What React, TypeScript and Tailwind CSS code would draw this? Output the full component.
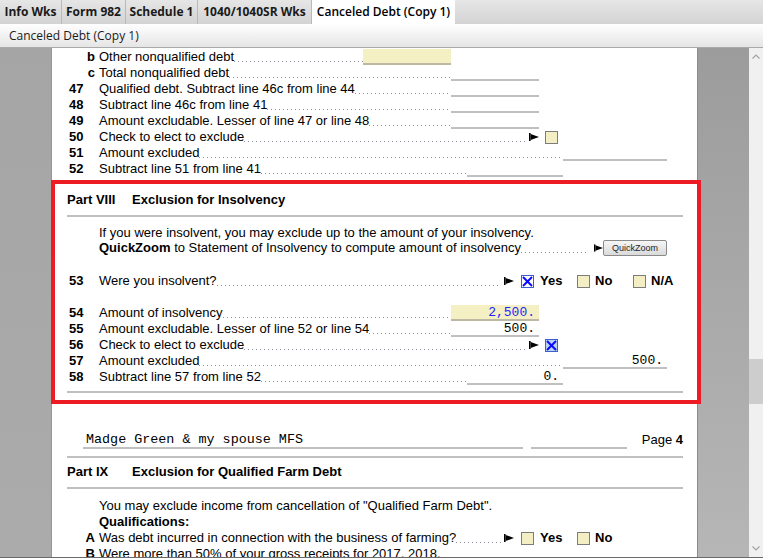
import React from "react";

const leader =
  "flex-1 min-w-0 h-[1px] mb-[3px] bg-[linear-gradient(to_right,#8d8d9e_1px,transparent_1px)] bg-[length:4px_1px] bg-repeat-x";

function Arrow() {
  return (
    <svg width="10" height="8" viewBox="0 0 10 8" className="block">
      <rect x="0" y="0" width="1.6" height="8" fill="#000" />
      <polygon points="1.6,1 10,4 1.6,7" fill="#000" />
    </svg>
  );
}

function Box({ checked = false, blue = false }: { checked?: boolean; blue?: boolean }) {
  if (checked) {
    return (
      <div
        className={`w-[13px] h-[13px] border border-[#3a5fd0] ${
          blue ? "bg-[#bcd2f0]" : "bg-white"
        }`}
      >
        <svg width="11" height="11" viewBox="0 0 11 11" className="block">
          <line x1="1" y1="1" x2="10" y2="10" stroke="#0a0aff" strokeWidth="2" />
          <line x1="10" y1="1" x2="1" y2="10" stroke="#0a0aff" strokeWidth="2" />
        </svg>
      </div>
    );
  }
  return <div className="w-[13px] h-[13px] border border-[#7c7c7c] bg-[#f4eec4]" />;
}

function Row({
  n,
  sub,
  label,
  lead,
  children,
}: {
  n?: string;
  sub?: string;
  label: React.ReactNode;
  lead: string;
  children?: React.ReactNode;
}) {
  return (
    <div className="flex h-[16px] leading-[16px]">
      {sub ? (
        <div className="w-[32px] shrink-0 font-bold text-right pr-[4px]">{sub}</div>
      ) : (
        <div className="w-[32px] shrink-0 font-bold pl-[2px]">{n}</div>
      )}
      <div className={`flex items-end shrink-0 ${lead}`}>
        <span className="whitespace-nowrap">{label}</span>
        <span className={leader} />
      </div>
      {children}
    </div>
  );
}

function Field({
  w,
  value,
  yellow = false,
  blue = false,
}: {
  w: string;
  value?: string;
  yellow?: boolean;
  blue?: boolean;
}) {
  return (
    <div
      className={`${w} h-[16px] border-b-2 text-right pr-[4px] font-['Liberation_Mono',monospace] text-[13px] leading-[15px] ${
        yellow ? "bg-[#f5efc4] border-[#bcb8a4]" : "border-[#c0c0c0]"
      } ${blue ? "text-[#1f1fff]" : "text-black"}`}
    >
      {value}
    </div>
  );
}

function YesNo({ na = false, yes = false }: { na?: boolean; yes?: boolean }) {
  return (
    <div className="flex items-center font-bold">
      <Box checked={yes} />
      <span className="w-[43px] pl-[6px]">Yes</span>
      <Box />
      <span className="w-[43px] pl-[5px]">No</span>
      {na ? (
        <>
          <Box />
          <span className="pl-[5px]">N/A</span>
        </>
      ) : null}
    </div>
  );
}

function Rule({ className }: { className: string }) {
  return <div className={`h-[2px] bg-[#c0c0c0] ${className}`} />;
}

function PartHead({ part, title, className }: { part: string; title: string; className: string }) {
  return (
    <div className={`flex h-[16px] leading-[16px] font-bold text-[13px] ${className}`}>
      <span className="w-[65px]">{part}</span>
      <span>{title}</span>
    </div>
  );
}

const tabs = [
  { label: "Info Wks", w: "w-[62px]" },
  { label: "Form 982", w: "w-[64px]" },
  { label: "Schedule 1", w: "w-[72px]" },
  { label: "1040/1040SR Wks", w: "w-[114px]" },
];

export default function App() {
  return (
    <div className="w-[763px] h-[558px] overflow-hidden flex flex-col bg-white text-black font-['Liberation_Sans',Arial,sans-serif] text-[13px]">
      {/* tab strip */}
      <div className="h-[24px] shrink-0 flex bg-gradient-to-b from-[#e6e6e6] to-[#d3d3d3] font-['Open_Sans',sans-serif] font-bold text-[12px] text-[#1a1a1a]">
        {tabs.map((t) => (
          <div
            key={t.label}
            className={`${t.w} flex items-center justify-center border-r border-[#b9b9b9] whitespace-nowrap`}
          >
            {t.label}
          </div>
        ))}
        <div className="w-[143px] flex items-center justify-center bg-white whitespace-nowrap font-semibold text-black">
          Canceled Debt (Copy 1)
        </div>
      </div>
      <div className="h-[24px] shrink-0 flex items-center px-[9px] border-b border-[#a9a9a9] bg-gradient-to-b from-white to-[#e5e5e5] font-['Open_Sans',sans-serif] text-[12px] text-[#1a1a1a]">
        Canceled Debt (Copy 1)
      </div>

      {/* document area */}
      <div className="relative flex flex-1 min-h-0 border-b border-[#6a6a6a]">
        <div className="w-[52px] shrink-0 bg-gradient-to-b from-[#a5a5a5] to-[#ababab] border-r border-[#979797]" />

        <div className="w-[645px] shrink-0 bg-white overflow-hidden pl-[15px]">
          <div className="w-[616px] pt-[1px]">
            <Row sub="b" label="Other nonqualified debt" lead="w-[264px]">
              <Field w="w-[88px]" yellow />
            </Row>
            <Row sub="c" label="Total nonqualified debt" lead="w-[352px]">
              <Field w="w-[88px]" />
            </Row>
            <Row n="47" label="Qualified debt. Subtract line 46c from line 44" lead="w-[352px]">
              <Field w="w-[88px]" />
            </Row>
            <Row n="48" label="Subtract line 46c from line 41" lead="w-[352px]">
              <Field w="w-[88px]" />
            </Row>
            <Row n="49" label="Amount excludable. Lesser of line 47 or line 48" lead="w-[352px]">
              <Field w="w-[88px]" />
            </Row>
            <Row n="50" label="Check to elect to exclude " lead="w-[426px]">
              <div className="w-[20px] pl-[4px] flex items-center">
                <Arrow />
              </div>
              <div className="flex items-center">
                <Box />
              </div>
            </Row>
            <Row n="51" label="Amount excluded" lead="w-[464px]">
              <Field w="w-[104px]" />
            </Row>
            <Row n="52" label="Subtract line 51 from line 41" lead="w-[368px]">
              <Field w="w-[96px]" />
            </Row>

            <PartHead part="Part VIII" title="Exclusion for Insolvency" className="mt-[15px]" />
            <Rule className="mt-[7px]" />

            <div className="pl-[32px] mt-[8px] h-[15px] leading-[15px]">
              If you were insolvent, you may exclude up to the amount of your insolvency.
            </div>
            <div className="flex h-[16px] leading-[16px] pl-[32px]">
              <div className="flex items-end w-[489px]">
                <span className="whitespace-nowrap">
                  <b>QuickZoom</b> to Statement of Insolvency to compute amount of insolvency
                </span>
                <span className={leader} />
              </div>
              <div className="w-[15px] pl-[6px] flex items-center">
                <Arrow />
              </div>
              <div className="w-[64px] h-[16px] border border-[#8a8a8a] rounded-[2px] bg-gradient-to-b from-[#f6f6f6] to-[#dadada] flex items-center justify-center text-[9px] leading-none text-[#222]">
                QuickZoom
              </div>
            </div>

            <div className="mt-[17px]">
              <Row n="53" label="Were you insolvent?" lead="w-[399px]">
                <div className="w-[23px] pl-[6px] flex items-center">
                  <Arrow />
                </div>
                <YesNo yes na />
              </Row>
            </div>

            <div className="mt-[16px]">
              <Row n="54" label="Amount of insolvency" lead="w-[352px]">
                <Field w="w-[88px]" value="2,500." yellow blue />
              </Row>
              <Row n="55" label="Amount excludable. Lesser of line 52 or line 54" lead="w-[352px]">
                <Field w="w-[88px]" value="500." />
              </Row>
              <Row n="56" label="Check to elect to exclude " lead="w-[426px]">
                <div className="w-[20px] pl-[4px] flex items-center">
                  <Arrow />
                </div>
                <div className="flex items-center">
                  <Box checked blue />
                </div>
              </Row>
              <Row n="57" label="Amount excluded" lead="w-[464px]">
                <Field w="w-[104px]" value="500." />
              </Row>
              <Row n="58" label="Subtract line 57 from line 52" lead="w-[368px]">
                <Field w="w-[96px]" value="0." />
              </Row>
            </div>
            <Rule className="mt-[6px]" />

            {/* footer of page */}
            <div className="mt-[39px] flex h-[17px]">
              <div className="ml-[16px] w-[440px] border-b-2 border-[#c0c0c0] font-['Liberation_Mono',monospace] text-[13.4px] leading-[16px] pl-[3px] whitespace-nowrap">
                Madge Green &amp; my spouse MFS
              </div>
              <div className="ml-[8px] w-[96px] border-b-2 border-[#c0c0c0]" />
              <div className="flex-1 text-right leading-[16px]">
                Page <b>4</b>
              </div>
            </div>
            <Rule className="mt-[7px]" />

            <PartHead part="Part IX" title="Exclusion for Qualified Farm Debt" className="mt-[6px]" />
            <Rule className="mt-[7px]" />

            <div className="pl-[32px] mt-[9px] h-[16px] leading-[16px]">
              You may exclude income from cancellation of "Qualified Farm Debt".
            </div>
            <div className="pl-[32px] h-[16px] leading-[16px] font-bold">Qualifications:</div>
            <Row sub="A" label="Was debt incurred in connection with the business of farming?" lead="w-[403px]">
              <div className="w-[19px] pl-[2px] flex items-center">
                <Arrow />
              </div>
              <YesNo />
            </Row>
            <Row sub="B" label="Were more than 50% of your gross receipts for 2017, 2018," lead="w-[403px]" />
          </div>
        </div>

        <div className="w-[52px] shrink-0 bg-gradient-to-b from-[#9c9c9c] to-[#b6b6b6] border-l border-[#8b8b8b]" />

        {/* scrollbar */}
        <div className="w-[14px] shrink-0 bg-[#f0f0f0] flex flex-col">
          <div className="h-[17px] flex items-center justify-center">
            <svg width="8" height="5" viewBox="0 0 8 5">
              <polyline points="0.5,4.5 4,1 7.5,4.5" fill="none" stroke="#a3a3a3" strokeWidth="1.2" />
            </svg>
          </div>
          <div className="flex-1">
            <div className="mt-[294px] h-[45px] bg-[#cdcdcd]" />
          </div>
          <div className="h-[17px] flex items-center justify-center">
            <svg width="8" height="5" viewBox="0 0 8 5">
              <polyline points="0.5,0.5 4,4 7.5,0.5" fill="none" stroke="#a3a3a3" strokeWidth="1.2" />
            </svg>
          </div>
        </div>

        {/* highlight annotation */}
        <div className="absolute left-[51px] top-[132px] w-[650px] h-[224px] border-4 border-[#ed1c24] pointer-events-none" />
      </div>
    </div>
  );
}
